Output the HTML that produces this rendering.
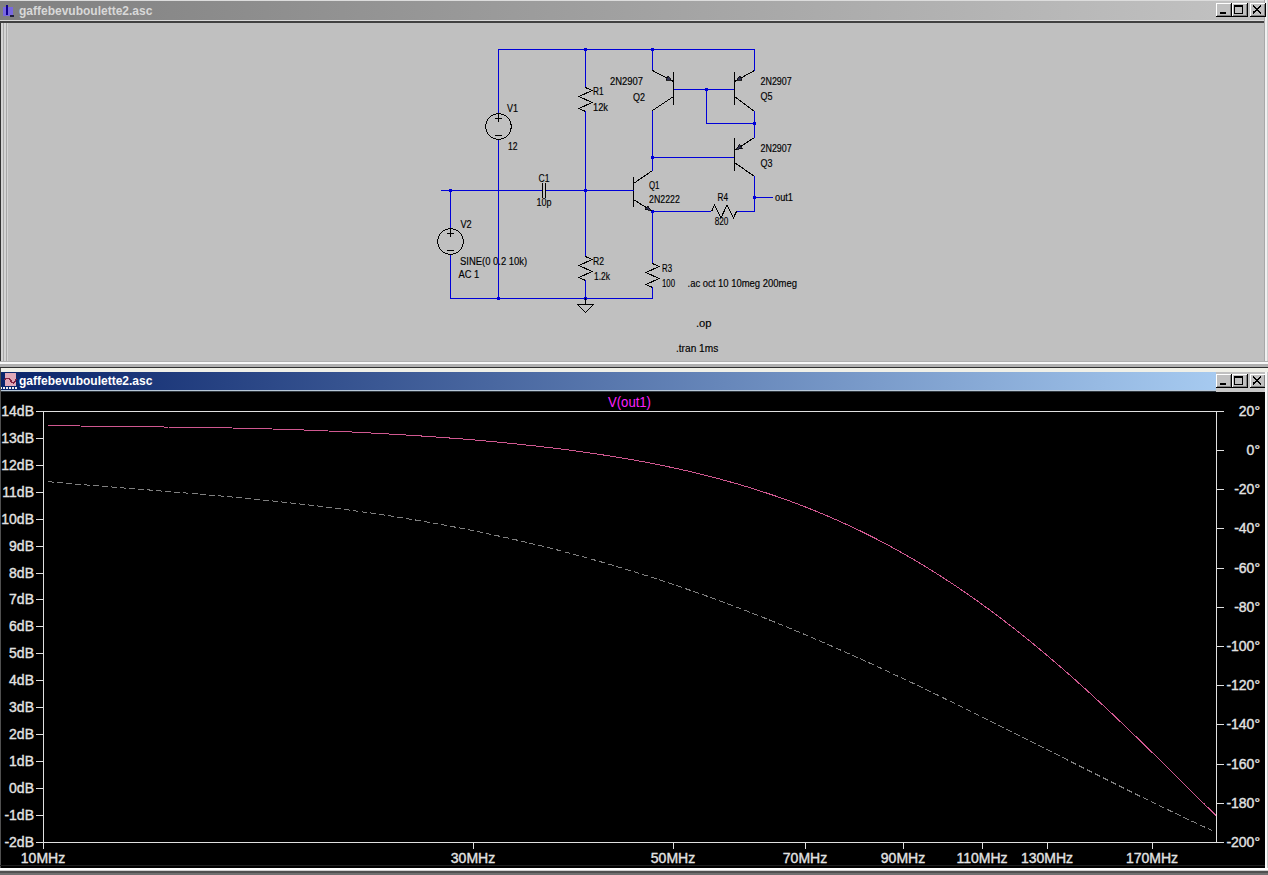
<!DOCTYPE html>
<html><head><meta charset="utf-8"><style>html,body{margin:0;padding:0;background:#000;overflow:hidden}svg{display:block}text{font-family:"Liberation Sans",sans-serif}</style></head>
<body><svg width="1268" height="875" viewBox="0 0 1268 875" shape-rendering="crispEdges">
<rect x="0" y="0" width="1268" height="368" fill="#c0c0c0"/>
<rect x="0" y="0" width="1268" height="1" fill="#dcdcdc"/>
<defs><linearGradient id="tg1" x1="0" x2="1216" gradientUnits="userSpaceOnUse"><stop offset="0" stop-color="#808080"/><stop offset="1" stop-color="#c0c0c0"/></linearGradient><linearGradient id="tg2" x1="0" x2="1216" gradientUnits="userSpaceOnUse"><stop offset="0" stop-color="#0a246a"/><stop offset="1" stop-color="#a6caf0"/></linearGradient></defs>
<rect x="0" y="1" width="1268" height="19" fill="url(#tg1)"/>
<rect x="1216" y="1" width="52" height="19" fill="#c0c0c0"/>
<rect x="0" y="20" width="1268" height="1" fill="#d8d8d8"/>
<rect x="0" y="21" width="1268" height="2" fill="#404040"/>
<rect x="0" y="23" width="1" height="338" fill="#333333"/>
<rect x="1" y="23" width="1" height="338" fill="#d4d4d4"/>
<rect x="2" y="23" width="1" height="338" fill="#d4d4d4"/>
<rect x="3" y="23" width="1" height="338" fill="#a8a8a8"/>
<rect x="4" y="23" width="1" height="338" fill="#d4d4d4"/>
<rect x="5" y="23" width="1" height="338" fill="#d4d4d4"/>
<rect x="6" y="23" width="1" height="338" fill="#a8a8a8"/>
<rect x="7" y="23" width="1" height="338" fill="#d4d4d4"/>
<rect x="0" y="23" width="1" height="345" fill="#333333"/>
<rect x="1264" y="0" width="1" height="368" fill="#a8a8a8"/>
<rect x="1265" y="0" width="1" height="368" fill="#f0f0f0"/>
<rect x="1266" y="0" width="1" height="368" fill="#f0f0f0"/>
<rect x="1267" y="0" width="1" height="368" fill="#d0d0d0"/>
<rect x="0" y="361" width="1268" height="1" fill="#b0b0b0"/>
<rect x="0" y="362" width="1268" height="2" fill="#f8f8f8"/>
<rect x="0" y="364" width="1268" height="3" fill="#b0b0b0"/>
<rect x="0" y="367" width="1268" height="1" fill="#303030"/>
<rect x="1216" y="3" width="16" height="14" fill="#c0c0c0"/>
<line x1="1216" y1="3.5" x2="1231" y2="3.5" stroke="#ffffff" stroke-width="1"/>
<line x1="1216.5" y1="3" x2="1216.5" y2="16" stroke="#ffffff" stroke-width="1"/>
<line x1="1216" y1="16.5" x2="1232" y2="16.5" stroke="#000000" stroke-width="1"/>
<line x1="1231.5" y1="3" x2="1231.5" y2="17" stroke="#000000" stroke-width="1"/>
<line x1="1217" y1="15.5" x2="1231" y2="15.5" stroke="#808080" stroke-width="1"/>
<line x1="1230.5" y1="4" x2="1230.5" y2="16" stroke="#808080" stroke-width="1"/>
<rect x="1232" y="3" width="16" height="14" fill="#c0c0c0"/>
<line x1="1232" y1="3.5" x2="1247" y2="3.5" stroke="#ffffff" stroke-width="1"/>
<line x1="1232.5" y1="3" x2="1232.5" y2="16" stroke="#ffffff" stroke-width="1"/>
<line x1="1232" y1="16.5" x2="1248" y2="16.5" stroke="#000000" stroke-width="1"/>
<line x1="1247.5" y1="3" x2="1247.5" y2="17" stroke="#000000" stroke-width="1"/>
<line x1="1233" y1="15.5" x2="1247" y2="15.5" stroke="#808080" stroke-width="1"/>
<line x1="1246.5" y1="4" x2="1246.5" y2="16" stroke="#808080" stroke-width="1"/>
<rect x="1250" y="3" width="16" height="14" fill="#c0c0c0"/>
<line x1="1250" y1="3.5" x2="1265" y2="3.5" stroke="#ffffff" stroke-width="1"/>
<line x1="1250.5" y1="3" x2="1250.5" y2="16" stroke="#ffffff" stroke-width="1"/>
<line x1="1250" y1="16.5" x2="1266" y2="16.5" stroke="#000000" stroke-width="1"/>
<line x1="1265.5" y1="3" x2="1265.5" y2="17" stroke="#000000" stroke-width="1"/>
<line x1="1251" y1="15.5" x2="1265" y2="15.5" stroke="#808080" stroke-width="1"/>
<line x1="1264.5" y1="4" x2="1264.5" y2="16" stroke="#808080" stroke-width="1"/>
<rect x="1220" y="12" width="6" height="2" fill="#000000"/>
<rect x="1234.5" y="5.5" width="8" height="8" fill="none" stroke="#000" stroke-width="1"/>
<rect x="1234" y="6" width="9" height="1" fill="#000000"/>
<path d="M1253 6 L1261 13 M1261 6 L1253 13" stroke="#000" stroke-width="1.6"/>
<text x="19" y="15" font-size="12" fill="#d8d8d8" text-anchor="start" font-weight="bold" >gaffebevuboulette2.asc</text>
<rect x="3" y="7" width="10" height="9" fill="#7868e0"/><rect x="6" y="5" width="2" height="10" fill="#100090"/><rect x="10" y="15" width="4" height="2" fill="#202040"/>
<line x1="498" y1="49.5" x2="755" y2="49.5" stroke="#0000d8" stroke-width="1"/>
<line x1="498.5" y1="49" x2="498.5" y2="114" stroke="#0000d8" stroke-width="1"/>
<line x1="498.5" y1="139" x2="498.5" y2="299" stroke="#0000d8" stroke-width="1"/>
<line x1="585.5" y1="49" x2="585.5" y2="88" stroke="#0000d8" stroke-width="1"/>
<line x1="585.5" y1="111" x2="585.5" y2="257" stroke="#0000d8" stroke-width="1"/>
<line x1="585.5" y1="280" x2="585.5" y2="299" stroke="#0000d8" stroke-width="1"/>
<line x1="441" y1="190.5" x2="543" y2="190.5" stroke="#0000d8" stroke-width="1"/>
<line x1="546" y1="190.5" x2="634" y2="190.5" stroke="#0000d8" stroke-width="1"/>
<line x1="450.5" y1="190" x2="450.5" y2="229" stroke="#0000d8" stroke-width="1"/>
<line x1="450.5" y1="254" x2="450.5" y2="299" stroke="#0000d8" stroke-width="1"/>
<line x1="450" y1="298.5" x2="653" y2="298.5" stroke="#0000d8" stroke-width="1"/>
<line x1="652.5" y1="49" x2="652.5" y2="71" stroke="#0000d8" stroke-width="1"/>
<line x1="652.5" y1="110" x2="652.5" y2="171" stroke="#0000d8" stroke-width="1"/>
<line x1="652.5" y1="211" x2="652.5" y2="264" stroke="#0000d8" stroke-width="1"/>
<line x1="652.5" y1="287" x2="652.5" y2="299" stroke="#0000d8" stroke-width="1"/>
<line x1="673" y1="89.5" x2="735" y2="89.5" stroke="#0000d8" stroke-width="1"/>
<line x1="706.5" y1="89" x2="706.5" y2="124" stroke="#0000d8" stroke-width="1"/>
<line x1="706" y1="123.5" x2="755" y2="123.5" stroke="#0000d8" stroke-width="1"/>
<line x1="754.5" y1="49" x2="754.5" y2="71" stroke="#0000d8" stroke-width="1"/>
<line x1="754.5" y1="111" x2="754.5" y2="138" stroke="#0000d8" stroke-width="1"/>
<line x1="754.5" y1="176" x2="754.5" y2="212" stroke="#0000d8" stroke-width="1"/>
<line x1="652" y1="157.5" x2="735" y2="157.5" stroke="#0000d8" stroke-width="1"/>
<line x1="652" y1="211.5" x2="711" y2="211.5" stroke="#0000d8" stroke-width="1"/>
<line x1="737" y1="211.5" x2="755" y2="211.5" stroke="#0000d8" stroke-width="1"/>
<line x1="754" y1="197.5" x2="773" y2="197.5" stroke="#0000d8" stroke-width="1"/>
<rect x="584" y="48" width="3" height="3" fill="#0000d8"/>
<rect x="651" y="48" width="3" height="3" fill="#0000d8"/>
<rect x="449" y="189" width="3" height="3" fill="#0000d8"/>
<rect x="584" y="189" width="3" height="3" fill="#0000d8"/>
<rect x="497" y="297" width="3" height="3" fill="#0000d8"/>
<rect x="584" y="297" width="3" height="3" fill="#0000d8"/>
<rect x="705" y="88" width="3" height="3" fill="#0000d8"/>
<rect x="753" y="122" width="3" height="3" fill="#0000d8"/>
<rect x="651" y="156" width="3" height="3" fill="#0000d8"/>
<rect x="651" y="210" width="3" height="3" fill="#0000d8"/>
<rect x="753" y="196" width="3" height="3" fill="#0000d8"/>
<circle cx="498.5" cy="126.5" r="12.8" fill="none" stroke="#000000" stroke-width="1"/>
<line x1="495" y1="118.5" x2="502" y2="118.5" stroke="#000000" stroke-width="1"/>
<line x1="498.5" y1="113" x2="498.5" y2="122" stroke="#000000" stroke-width="1"/>
<line x1="495" y1="135.5" x2="502" y2="135.5" stroke="#000000" stroke-width="1"/>
<circle cx="450.5" cy="241.5" r="12.8" fill="none" stroke="#000000" stroke-width="1"/>
<line x1="447" y1="233.5" x2="454" y2="233.5" stroke="#000000" stroke-width="1"/>
<line x1="450.5" y1="228" x2="450.5" y2="237" stroke="#000000" stroke-width="1"/>
<line x1="447" y1="250.5" x2="454" y2="250.5" stroke="#000000" stroke-width="1"/>
<path d="M585.5,87.5 L592.0,90.5 L579.0,96.5 L592.0,102.5 L579.0,108.5 L585.5,111.5" fill="none" stroke="#000000" stroke-width="1"/>
<path d="M585.5,256.5 L592.0,259.5 L579.0,265.5 L592.0,271.5 L579.0,277.5 L585.5,280.5" fill="none" stroke="#000000" stroke-width="1"/>
<path d="M652.5,263.5 L659.0,266.5 L646.0,272.5 L659.0,278.5 L646.0,284.5 L652.5,287.5" fill="none" stroke="#000000" stroke-width="1"/>
<path d="M711.5,211.5 L714.625,205.0 L720.875,218.0 L727.125,205.0 L733.375,218.0 L736.5,211.5" fill="none" stroke="#000000" stroke-width="1"/>
<line x1="542.5" y1="183" x2="542.5" y2="198" stroke="#000000" stroke-width="1"/>
<line x1="545.5" y1="183" x2="545.5" y2="198" stroke="#000000" stroke-width="1"/>
<line x1="585.5" y1="298" x2="585.5" y2="305" stroke="#000000" stroke-width="1"/>
<path d="M577.5,304.5 L593.5,304.5 L585.5,312.5 Z" fill="none" stroke="#000" stroke-width="1"/>

<line x1="673.5" y1="72" x2="673.5" y2="105" stroke="#000000" stroke-width="1"/>
<line x1="673.5" y1="81.5" x2="652.5" y2="70.5" stroke="#000000" stroke-width="1"/>
<line x1="673.5" y1="96.5" x2="652.5" y2="110.5" stroke="#000000" stroke-width="1"/>

<line x1="734.5" y1="72" x2="734.5" y2="105" stroke="#000000" stroke-width="1"/>
<line x1="734.5" y1="81.5" x2="754.5" y2="70.5" stroke="#000000" stroke-width="1"/>
<line x1="734.5" y1="96.5" x2="754.5" y2="111.5" stroke="#000000" stroke-width="1"/>

<line x1="734.5" y1="138" x2="734.5" y2="171" stroke="#000000" stroke-width="1"/>
<line x1="734.5" y1="150.5" x2="754.5" y2="137.5" stroke="#000000" stroke-width="1"/>
<line x1="734.5" y1="162.5" x2="754.5" y2="176.5" stroke="#000000" stroke-width="1"/>

<line x1="633.5" y1="177" x2="633.5" y2="207" stroke="#000000" stroke-width="1"/>
<line x1="633.5" y1="183.5" x2="652.5" y2="170.5" stroke="#000000" stroke-width="1"/>
<line x1="633.5" y1="199.5" x2="652.5" y2="211.5" stroke="#000000" stroke-width="1"/>
<line x1="585" y1="190.5" x2="634" y2="190.5" stroke="#0000d8" stroke-width="1"/>
<path d="M671.4,80.4 L665.8108248369228,80.29454386484761 L668.1308598102755,75.86538618844682 Z" fill="#303050" stroke="#000000" stroke-width="0.8"/>
<path d="M736.5,80.4 L739.6762826689528,75.7998664794476 L742.0858764178136,80.18094602283084 Z" fill="#303050" stroke="#000000" stroke-width="0.8"/>
<path d="M736.5,149.2 L739.3297472050147,144.37894920627133 L742.0546889579916,148.57116728777453 Z" fill="#303050" stroke="#000000" stroke-width="0.8"/>
<path d="M650.6,210.3 L645.0375730063752,209.74375730063753 L647.7075379633152,205.51631278548268 Z" fill="#303050" stroke="#000000" stroke-width="0.8"/>
<text x="507" y="112" font-size="10" fill="#000000" text-anchor="start" font-weight="normal" textLength="11" lengthAdjust="spacingAndGlyphs" stroke="#000" stroke-width="0.15">V1</text>
<text x="508" y="150" font-size="10" fill="#000000" text-anchor="start" font-weight="normal" textLength="9.5" lengthAdjust="spacingAndGlyphs" stroke="#000" stroke-width="0.15">12</text>
<text x="593" y="95" font-size="10" fill="#000000" text-anchor="start" font-weight="normal" textLength="10.5" lengthAdjust="spacingAndGlyphs" stroke="#000" stroke-width="0.15">R1</text>
<text x="593" y="111" font-size="10" fill="#000000" text-anchor="start" font-weight="normal" textLength="15" lengthAdjust="spacingAndGlyphs" stroke="#000" stroke-width="0.15">12k</text>
<text x="538.5" y="182" font-size="10" fill="#000000" text-anchor="start" font-weight="normal" textLength="11" lengthAdjust="spacingAndGlyphs" stroke="#000" stroke-width="0.15">C1</text>
<text x="536.5" y="206" font-size="10" fill="#000000" text-anchor="start" font-weight="normal" textLength="15" lengthAdjust="spacingAndGlyphs" stroke="#000" stroke-width="0.15">10p</text>
<text x="460.5" y="228" font-size="10" fill="#000000" text-anchor="start" font-weight="normal" textLength="11.2" lengthAdjust="spacingAndGlyphs" stroke="#000" stroke-width="0.15">V2</text>
<text x="460" y="265" font-size="10" fill="#000000" text-anchor="start" font-weight="normal" textLength="67.2" lengthAdjust="spacingAndGlyphs" stroke="#000" stroke-width="0.15">SINE(0 0.2 10k)</text>
<text x="458.5" y="278" font-size="10" fill="#000000" text-anchor="start" font-weight="normal" textLength="20.8" lengthAdjust="spacingAndGlyphs" stroke="#000" stroke-width="0.15">AC 1</text>
<text x="593" y="265" font-size="10" fill="#000000" text-anchor="start" font-weight="normal" textLength="11" lengthAdjust="spacingAndGlyphs" stroke="#000" stroke-width="0.15">R2</text>
<text x="594" y="280" font-size="10" fill="#000000" text-anchor="start" font-weight="normal" textLength="16" lengthAdjust="spacingAndGlyphs" stroke="#000" stroke-width="0.15">1.2k</text>
<text x="662" y="272" font-size="10" fill="#000000" text-anchor="start" font-weight="normal" textLength="10" lengthAdjust="spacingAndGlyphs" stroke="#000" stroke-width="0.15">R3</text>
<text x="662" y="287" font-size="10" fill="#000000" text-anchor="start" font-weight="normal" textLength="13" lengthAdjust="spacingAndGlyphs" stroke="#000" stroke-width="0.15">100</text>
<text x="687.5" y="287" font-size="10" fill="#000000" text-anchor="start" font-weight="normal" textLength="109.5" lengthAdjust="spacingAndGlyphs" stroke="#000" stroke-width="0.15">.ac oct 10 10meg 200meg</text>
<text x="696" y="327" font-size="10" fill="#000000" text-anchor="start" font-weight="normal" textLength="15.6" lengthAdjust="spacingAndGlyphs" stroke="#000" stroke-width="0.15">.op</text>
<text x="676" y="352" font-size="10" fill="#000000" text-anchor="start" font-weight="normal" textLength="42.2" lengthAdjust="spacingAndGlyphs" stroke="#000" stroke-width="0.15">.tran 1ms</text>
<text x="610" y="85" font-size="10" fill="#000000" text-anchor="start" font-weight="normal" textLength="33" lengthAdjust="spacingAndGlyphs" stroke="#000" stroke-width="0.15">2N2907</text>
<text x="633" y="101" font-size="10" fill="#000000" text-anchor="start" font-weight="normal" textLength="12" lengthAdjust="spacingAndGlyphs" stroke="#000" stroke-width="0.15">Q2</text>
<text x="760.5" y="85" font-size="10" fill="#000000" text-anchor="start" font-weight="normal" textLength="31.2" lengthAdjust="spacingAndGlyphs" stroke="#000" stroke-width="0.15">2N2907</text>
<text x="760.5" y="100" font-size="10" fill="#000000" text-anchor="start" font-weight="normal" textLength="12" lengthAdjust="spacingAndGlyphs" stroke="#000" stroke-width="0.15">Q5</text>
<text x="760.5" y="152" font-size="10" fill="#000000" text-anchor="start" font-weight="normal" textLength="31.2" lengthAdjust="spacingAndGlyphs" stroke="#000" stroke-width="0.15">2N2907</text>
<text x="760.5" y="167" font-size="10" fill="#000000" text-anchor="start" font-weight="normal" textLength="12" lengthAdjust="spacingAndGlyphs" stroke="#000" stroke-width="0.15">Q3</text>
<text x="649" y="189" font-size="10" fill="#000000" text-anchor="start" font-weight="normal" textLength="10.5" lengthAdjust="spacingAndGlyphs" stroke="#000" stroke-width="0.15">Q1</text>
<text x="649" y="203" font-size="10" fill="#000000" text-anchor="start" font-weight="normal" textLength="30.8" lengthAdjust="spacingAndGlyphs" stroke="#000" stroke-width="0.15">2N2222</text>
<text x="717.5" y="201" font-size="10" fill="#000000" text-anchor="start" font-weight="normal" textLength="10.5" lengthAdjust="spacingAndGlyphs" stroke="#000" stroke-width="0.15">R4</text>
<text x="714.7" y="225" font-size="10" fill="#000000" text-anchor="start" font-weight="normal" textLength="13.7" lengthAdjust="spacingAndGlyphs" stroke="#000" stroke-width="0.15">820</text>
<text x="775" y="201" font-size="10" fill="#000000" text-anchor="start" font-weight="normal" textLength="18" lengthAdjust="spacingAndGlyphs" stroke="#000" stroke-width="0.15">out1</text>
<rect x="0" y="368" width="1268" height="507" fill="#000000"/>
<rect x="0" y="368" width="1268" height="4" fill="#f0f0e8"/>
<rect x="0" y="372" width="1216" height="20" fill="url(#tg2)"/>
<rect x="1216" y="372" width="52" height="20" fill="#c0c0c0"/>
<rect x="0" y="390" width="1268" height="1" fill="#b8c8d8"/>
<rect x="0" y="391" width="1268" height="1" fill="#303840"/>
<rect x="1216" y="388" width="52" height="4" fill="#c8c8c8"/>
<rect x="1216" y="374" width="16" height="14" fill="#c0c0c0"/>
<line x1="1216" y1="374.5" x2="1231" y2="374.5" stroke="#ffffff" stroke-width="1"/>
<line x1="1216.5" y1="374" x2="1216.5" y2="387" stroke="#ffffff" stroke-width="1"/>
<line x1="1216" y1="387.5" x2="1232" y2="387.5" stroke="#000000" stroke-width="1"/>
<line x1="1231.5" y1="374" x2="1231.5" y2="388" stroke="#000000" stroke-width="1"/>
<line x1="1217" y1="386.5" x2="1231" y2="386.5" stroke="#808080" stroke-width="1"/>
<line x1="1230.5" y1="375" x2="1230.5" y2="387" stroke="#808080" stroke-width="1"/>
<rect x="1232" y="374" width="16" height="14" fill="#c0c0c0"/>
<line x1="1232" y1="374.5" x2="1247" y2="374.5" stroke="#ffffff" stroke-width="1"/>
<line x1="1232.5" y1="374" x2="1232.5" y2="387" stroke="#ffffff" stroke-width="1"/>
<line x1="1232" y1="387.5" x2="1248" y2="387.5" stroke="#000000" stroke-width="1"/>
<line x1="1247.5" y1="374" x2="1247.5" y2="388" stroke="#000000" stroke-width="1"/>
<line x1="1233" y1="386.5" x2="1247" y2="386.5" stroke="#808080" stroke-width="1"/>
<line x1="1246.5" y1="375" x2="1246.5" y2="387" stroke="#808080" stroke-width="1"/>
<rect x="1250" y="374" width="16" height="14" fill="#c0c0c0"/>
<line x1="1250" y1="374.5" x2="1265" y2="374.5" stroke="#ffffff" stroke-width="1"/>
<line x1="1250.5" y1="374" x2="1250.5" y2="387" stroke="#ffffff" stroke-width="1"/>
<line x1="1250" y1="387.5" x2="1266" y2="387.5" stroke="#000000" stroke-width="1"/>
<line x1="1265.5" y1="374" x2="1265.5" y2="388" stroke="#000000" stroke-width="1"/>
<line x1="1251" y1="386.5" x2="1265" y2="386.5" stroke="#808080" stroke-width="1"/>
<line x1="1264.5" y1="375" x2="1264.5" y2="387" stroke="#808080" stroke-width="1"/>
<rect x="1220" y="383" width="6" height="2" fill="#000000"/>
<rect x="1234.5" y="376.5" width="8" height="8" fill="none" stroke="#000" stroke-width="1"/>
<rect x="1234" y="377" width="9" height="1" fill="#000000"/>
<path d="M1253 377 L1261 384 M1261 377 L1253 384" stroke="#000" stroke-width="1.6"/>
<text x="19" y="385" font-size="12" fill="#ffffff" text-anchor="start" font-weight="bold" >gaffebevuboulette2.asc</text>
<rect x="5" y="373" width="11" height="13" fill="#e0a8b8"/><path d="M5 380 Q8 376 11 381 T16 379" stroke="#802040" fill="none" stroke-width="1.5"/>
<rect x="0" y="387" width="2" height="2" fill="#f0f0f0"/>
<rect x="3" y="387" width="2" height="2" fill="#f0f0f0"/>
<rect x="6" y="387" width="2" height="2" fill="#f0f0f0"/>
<rect x="9" y="387" width="2" height="2" fill="#f0f0f0"/>
<rect x="12" y="387" width="2" height="2" fill="#f0f0f0"/>
<rect x="15" y="387" width="2" height="2" fill="#f0f0f0"/>
<rect x="0" y="368" width="1" height="507" fill="#505050"/>
<rect x="1265" y="372" width="2" height="496" fill="#f8f8f8"/>
<rect x="1267" y="372" width="1" height="496" fill="#c8c8c8"/>
<rect x="0" y="865" width="1265" height="1" fill="#202020"/>
<rect x="0" y="868" width="1268" height="2" fill="#ffffff"/>
<rect x="0" y="870" width="1268" height="1" fill="#d0d0d0"/>
<rect x="0" y="871" width="1268" height="2" fill="#505050"/>
<rect x="0" y="873" width="1268" height="2" fill="#707070"/>
<line x1="43" y1="411.5" x2="1217" y2="411.5" stroke="#e0e0e0" stroke-width="1"/>
<line x1="43" y1="842.5" x2="1217" y2="842.5" stroke="#e0e0e0" stroke-width="1"/>
<line x1="43.5" y1="411" x2="43.5" y2="843" stroke="#e0e0e0" stroke-width="1"/>
<line x1="1216.5" y1="411" x2="1216.5" y2="843" stroke="#e0e0e0" stroke-width="1"/>
<line x1="36" y1="411.5" x2="44" y2="411.5" stroke="#e0e0e0" stroke-width="1"/>
<text x="34" y="416" font-size="14" fill="#e0e0e0" text-anchor="end" font-weight="normal" stroke="#e8e8e8" stroke-width="0.35">14dB</text>
<line x1="36" y1="438.5" x2="44" y2="438.5" stroke="#e0e0e0" stroke-width="1"/>
<text x="34" y="443" font-size="14" fill="#e0e0e0" text-anchor="end" font-weight="normal" stroke="#e8e8e8" stroke-width="0.35">13dB</text>
<line x1="36" y1="465.5" x2="44" y2="465.5" stroke="#e0e0e0" stroke-width="1"/>
<text x="34" y="470" font-size="14" fill="#e0e0e0" text-anchor="end" font-weight="normal" stroke="#e8e8e8" stroke-width="0.35">12dB</text>
<line x1="36" y1="492.5" x2="44" y2="492.5" stroke="#e0e0e0" stroke-width="1"/>
<text x="34" y="497" font-size="14" fill="#e0e0e0" text-anchor="end" font-weight="normal" stroke="#e8e8e8" stroke-width="0.35">11dB</text>
<line x1="36" y1="519.5" x2="44" y2="519.5" stroke="#e0e0e0" stroke-width="1"/>
<text x="34" y="524" font-size="14" fill="#e0e0e0" text-anchor="end" font-weight="normal" stroke="#e8e8e8" stroke-width="0.35">10dB</text>
<line x1="36" y1="546.5" x2="44" y2="546.5" stroke="#e0e0e0" stroke-width="1"/>
<text x="34" y="551" font-size="14" fill="#e0e0e0" text-anchor="end" font-weight="normal" stroke="#e8e8e8" stroke-width="0.35">9dB</text>
<line x1="36" y1="573.5" x2="44" y2="573.5" stroke="#e0e0e0" stroke-width="1"/>
<text x="34" y="578" font-size="14" fill="#e0e0e0" text-anchor="end" font-weight="normal" stroke="#e8e8e8" stroke-width="0.35">8dB</text>
<line x1="36" y1="599.5" x2="44" y2="599.5" stroke="#e0e0e0" stroke-width="1"/>
<text x="34" y="604" font-size="14" fill="#e0e0e0" text-anchor="end" font-weight="normal" stroke="#e8e8e8" stroke-width="0.35">7dB</text>
<line x1="36" y1="626.5" x2="44" y2="626.5" stroke="#e0e0e0" stroke-width="1"/>
<text x="34" y="631" font-size="14" fill="#e0e0e0" text-anchor="end" font-weight="normal" stroke="#e8e8e8" stroke-width="0.35">6dB</text>
<line x1="36" y1="653.5" x2="44" y2="653.5" stroke="#e0e0e0" stroke-width="1"/>
<text x="34" y="658" font-size="14" fill="#e0e0e0" text-anchor="end" font-weight="normal" stroke="#e8e8e8" stroke-width="0.35">5dB</text>
<line x1="36" y1="680.5" x2="44" y2="680.5" stroke="#e0e0e0" stroke-width="1"/>
<text x="34" y="685" font-size="14" fill="#e0e0e0" text-anchor="end" font-weight="normal" stroke="#e8e8e8" stroke-width="0.35">4dB</text>
<line x1="36" y1="707.5" x2="44" y2="707.5" stroke="#e0e0e0" stroke-width="1"/>
<text x="34" y="712" font-size="14" fill="#e0e0e0" text-anchor="end" font-weight="normal" stroke="#e8e8e8" stroke-width="0.35">3dB</text>
<line x1="36" y1="734.5" x2="44" y2="734.5" stroke="#e0e0e0" stroke-width="1"/>
<text x="34" y="739" font-size="14" fill="#e0e0e0" text-anchor="end" font-weight="normal" stroke="#e8e8e8" stroke-width="0.35">2dB</text>
<line x1="36" y1="761.5" x2="44" y2="761.5" stroke="#e0e0e0" stroke-width="1"/>
<text x="34" y="766" font-size="14" fill="#e0e0e0" text-anchor="end" font-weight="normal" stroke="#e8e8e8" stroke-width="0.35">1dB</text>
<line x1="36" y1="788.5" x2="44" y2="788.5" stroke="#e0e0e0" stroke-width="1"/>
<text x="34" y="793" font-size="14" fill="#e0e0e0" text-anchor="end" font-weight="normal" stroke="#e8e8e8" stroke-width="0.35">0dB</text>
<line x1="36" y1="815.5" x2="44" y2="815.5" stroke="#e0e0e0" stroke-width="1"/>
<text x="34" y="820" font-size="14" fill="#e0e0e0" text-anchor="end" font-weight="normal" stroke="#e8e8e8" stroke-width="0.35">-1dB</text>
<line x1="36" y1="842.5" x2="44" y2="842.5" stroke="#e0e0e0" stroke-width="1"/>
<text x="34" y="847" font-size="14" fill="#e0e0e0" text-anchor="end" font-weight="normal" stroke="#e8e8e8" stroke-width="0.35">-2dB</text>
<line x1="1216" y1="411.5" x2="1224" y2="411.5" stroke="#e0e0e0" stroke-width="1"/>
<text x="1260" y="416" font-size="14" fill="#e0e0e0" text-anchor="end" font-weight="normal" stroke="#e8e8e8" stroke-width="0.35">20°</text>
<line x1="1216" y1="450.5" x2="1224" y2="450.5" stroke="#e0e0e0" stroke-width="1"/>
<text x="1260" y="455" font-size="14" fill="#e0e0e0" text-anchor="end" font-weight="normal" stroke="#e8e8e8" stroke-width="0.35">0°</text>
<line x1="1216" y1="489.5" x2="1224" y2="489.5" stroke="#e0e0e0" stroke-width="1"/>
<text x="1260" y="494" font-size="14" fill="#e0e0e0" text-anchor="end" font-weight="normal" stroke="#e8e8e8" stroke-width="0.35">-20°</text>
<line x1="1216" y1="528.5" x2="1224" y2="528.5" stroke="#e0e0e0" stroke-width="1"/>
<text x="1260" y="533" font-size="14" fill="#e0e0e0" text-anchor="end" font-weight="normal" stroke="#e8e8e8" stroke-width="0.35">-40°</text>
<line x1="1216" y1="568.5" x2="1224" y2="568.5" stroke="#e0e0e0" stroke-width="1"/>
<text x="1260" y="573" font-size="14" fill="#e0e0e0" text-anchor="end" font-weight="normal" stroke="#e8e8e8" stroke-width="0.35">-60°</text>
<line x1="1216" y1="607.5" x2="1224" y2="607.5" stroke="#e0e0e0" stroke-width="1"/>
<text x="1260" y="612" font-size="14" fill="#e0e0e0" text-anchor="end" font-weight="normal" stroke="#e8e8e8" stroke-width="0.35">-80°</text>
<line x1="1216" y1="646.5" x2="1224" y2="646.5" stroke="#e0e0e0" stroke-width="1"/>
<text x="1260" y="651" font-size="14" fill="#e0e0e0" text-anchor="end" font-weight="normal" stroke="#e8e8e8" stroke-width="0.35">-100°</text>
<line x1="1216" y1="685.5" x2="1224" y2="685.5" stroke="#e0e0e0" stroke-width="1"/>
<text x="1260" y="690" font-size="14" fill="#e0e0e0" text-anchor="end" font-weight="normal" stroke="#e8e8e8" stroke-width="0.35">-120°</text>
<line x1="1216" y1="724.5" x2="1224" y2="724.5" stroke="#e0e0e0" stroke-width="1"/>
<text x="1260" y="729" font-size="14" fill="#e0e0e0" text-anchor="end" font-weight="normal" stroke="#e8e8e8" stroke-width="0.35">-140°</text>
<line x1="1216" y1="764.5" x2="1224" y2="764.5" stroke="#e0e0e0" stroke-width="1"/>
<text x="1260" y="769" font-size="14" fill="#e0e0e0" text-anchor="end" font-weight="normal" stroke="#e8e8e8" stroke-width="0.35">-160°</text>
<line x1="1216" y1="803.5" x2="1224" y2="803.5" stroke="#e0e0e0" stroke-width="1"/>
<text x="1260" y="808" font-size="14" fill="#e0e0e0" text-anchor="end" font-weight="normal" stroke="#e8e8e8" stroke-width="0.35">-180°</text>
<line x1="1216" y1="842.5" x2="1224" y2="842.5" stroke="#e0e0e0" stroke-width="1"/>
<text x="1260" y="847" font-size="14" fill="#e0e0e0" text-anchor="end" font-weight="normal" stroke="#e8e8e8" stroke-width="0.35">-200°</text>
<line x1="43.5" y1="842" x2="43.5" y2="849" stroke="#e0e0e0" stroke-width="1"/>
<line x1="473.5" y1="842" x2="473.5" y2="849" stroke="#e0e0e0" stroke-width="1"/>
<text x="473" y="863" font-size="14" fill="#e0e0e0" text-anchor="middle" font-weight="normal" stroke="#e8e8e8" stroke-width="0.35">30MHz</text>
<line x1="673.5" y1="842" x2="673.5" y2="849" stroke="#e0e0e0" stroke-width="1"/>
<text x="673" y="863" font-size="14" fill="#e0e0e0" text-anchor="middle" font-weight="normal" stroke="#e8e8e8" stroke-width="0.35">50MHz</text>
<line x1="805.5" y1="842" x2="805.5" y2="849" stroke="#e0e0e0" stroke-width="1"/>
<text x="805" y="863" font-size="14" fill="#e0e0e0" text-anchor="middle" font-weight="normal" stroke="#e8e8e8" stroke-width="0.35">70MHz</text>
<line x1="903.5" y1="842" x2="903.5" y2="849" stroke="#e0e0e0" stroke-width="1"/>
<text x="903" y="863" font-size="14" fill="#e0e0e0" text-anchor="middle" font-weight="normal" stroke="#e8e8e8" stroke-width="0.35">90MHz</text>
<line x1="982.5" y1="842" x2="982.5" y2="849" stroke="#e0e0e0" stroke-width="1"/>
<text x="982" y="863" font-size="14" fill="#e0e0e0" text-anchor="middle" font-weight="normal" stroke="#e8e8e8" stroke-width="0.35">110MHz</text>
<line x1="1047.5" y1="842" x2="1047.5" y2="849" stroke="#e0e0e0" stroke-width="1"/>
<text x="1047" y="863" font-size="14" fill="#e0e0e0" text-anchor="middle" font-weight="normal" stroke="#e8e8e8" stroke-width="0.35">130MHz</text>
<line x1="1152.5" y1="842" x2="1152.5" y2="849" stroke="#e0e0e0" stroke-width="1"/>
<text x="1152" y="863" font-size="14" fill="#e0e0e0" text-anchor="middle" font-weight="normal" stroke="#e8e8e8" stroke-width="0.35">170MHz</text>
<text x="43" y="863" font-size="14" fill="#e0e0e0" text-anchor="middle" font-weight="normal" stroke="#e8e8e8" stroke-width="0.35">10MHz</text>
<text x="608" y="407" font-size="14" fill="#ff20ff" text-anchor="start" font-weight="normal" textLength="43" lengthAdjust="spacingAndGlyphs">V(out1)</text>
<path d="M48,425.3 L52,425.4 L56,425.5 L60,425.6 L64,425.7 L68,425.8 L72,425.9 L76,425.9 L80,426.0 L84,426.1 L88,426.1 L92,426.2 L96,426.2 L100,426.3 L104,426.3 L108,426.4 L112,426.4 L116,426.5 L120,426.5 L124,426.5 L128,426.6 L132,426.6 L136,426.7 L140,426.7 L144,426.7 L148,426.8 L152,426.8 L156,426.9 L160,426.9 L164,427.0 L168,427.0 L172,427.1 L176,427.1 L180,427.2 L184,427.2 L188,427.3 L192,427.3 L196,427.4 L200,427.4 L204,427.5 L208,427.6 L212,427.6 L216,427.7 L220,427.8 L224,427.8 L228,427.9 L232,428.0 L236,428.1 L240,428.2 L244,428.3 L248,428.4 L252,428.5 L256,428.6 L260,428.7 L264,428.8 L268,428.9 L272,429.0 L276,429.1 L280,429.2 L284,429.4 L288,429.5 L292,429.6 L296,429.8 L300,429.9 L304,430.0 L308,430.2 L312,430.3 L316,430.5 L320,430.6 L324,430.8 L328,431.0 L332,431.1 L336,431.3 L340,431.5 L344,431.7 L348,431.9 L352,432.0 L356,432.2 L360,432.4 L364,432.6 L368,432.8 L372,433.1 L376,433.3 L380,433.5 L384,433.7 L388,433.9 L392,434.2 L396,434.4 L400,434.6 L404,434.9 L408,435.1 L412,435.4 L416,435.6 L420,435.9 L424,436.2 L428,436.4 L432,436.7 L436,437.0 L440,437.3 L444,437.6 L448,437.9 L452,438.2 L456,438.5 L460,438.8 L464,439.1 L468,439.5 L472,439.8 L476,440.1 L480,440.5 L484,440.8 L488,441.2 L492,441.6 L496,441.9 L500,442.3 L504,442.7 L508,443.1 L512,443.5 L516,443.9 L520,444.3 L524,444.7 L528,445.2 L532,445.6 L536,446.0 L540,446.5 L544,447.0 L548,447.4 L552,447.9 L556,448.4 L560,448.9 L564,449.4 L568,449.9 L572,450.5 L576,451.0 L580,451.5 L584,452.1 L588,452.7 L592,453.3 L596,453.8 L600,454.4 L604,455.1 L608,455.7 L612,456.3 L616,457.0 L620,457.6 L624,458.3 L628,459.0 L632,459.7 L636,460.4 L640,461.2 L644,461.9 L648,462.7 L652,463.4 L656,464.2 L660,465.0 L664,465.8 L668,466.7 L672,467.5 L676,468.4 L680,469.3 L684,470.2 L688,471.1 L692,472.0 L696,473.0 L700,473.9 L704,474.9 L708,475.9 L712,477.0 L716,478.0 L720,479.1 L724,480.2 L728,481.3 L732,482.4 L736,483.5 L740,484.7 L744,485.9 L748,487.1 L752,488.3 L756,489.6 L760,490.9 L764,492.2 L768,493.5 L772,494.8 L776,496.2 L780,497.6 L784,499.0 L788,500.4 L792,501.9 L796,503.4 L800,504.9 L804,506.4 L808,508.0 L812,509.6 L816,511.2 L820,512.9 L824,514.5 L828,516.2 L832,518.0 L836,519.7 L840,521.5 L844,523.3 L848,525.1 L852,527.0 L856,528.9 L860,530.8 L864,532.8 L868,534.8 L872,536.8 L876,538.8 L880,540.9 L884,543.0 L888,545.1 L892,547.3 L896,549.5 L900,551.7 L904,554.0 L908,556.3 L912,558.6 L916,560.9 L920,563.3 L924,565.7 L928,568.2 L932,570.7 L936,573.2 L940,575.7 L944,578.3 L948,580.9 L952,583.5 L956,586.2 L960,588.9 L964,591.6 L968,594.4 L972,597.2 L976,600.0 L980,602.9 L984,605.8 L988,608.7 L992,611.6 L996,614.6 L1000,617.6 L1004,620.7 L1008,623.8 L1012,626.9 L1016,630.0 L1020,633.2 L1024,636.4 L1028,639.6 L1032,642.9 L1036,646.2 L1040,649.5 L1044,652.8 L1048,656.2 L1052,659.6 L1056,663.0 L1060,666.5 L1064,670.0 L1068,673.5 L1072,677.0 L1076,680.6 L1080,684.2 L1084,687.8 L1088,691.4 L1092,695.1 L1096,698.8 L1100,702.5 L1104,706.2 L1108,709.9 L1112,713.7 L1116,717.5 L1120,721.3 L1124,725.1 L1128,728.9 L1132,732.8 L1136,736.7 L1140,740.5 L1144,744.4 L1148,748.3 L1152,752.3 L1156,756.2 L1160,760.1 L1164,764.1 L1168,768.0 L1172,772.0 L1176,776.0 L1180,779.9 L1184,783.9 L1188,787.9 L1192,791.8 L1196,795.8 L1200,799.8 L1204,803.7 L1208,807.7 L1212,811.6 L1216,815.6" fill="none" stroke="#d05890" stroke-width="1"/>
<path d="M48,481.7 L52,482.0 L56,482.4 L60,482.7 L64,483.1 L68,483.4 L72,483.7 L76,484.1 L80,484.4 L84,484.7 L88,485.1 L92,485.4 L96,485.7 L100,486.1 L104,486.4 L108,486.7 L112,487.0 L116,487.3 L120,487.7 L124,488.0 L128,488.3 L132,488.6 L136,488.9 L140,489.3 L144,489.6 L148,489.9 L152,490.2 L156,490.5 L160,490.9 L164,491.2 L168,491.5 L172,491.8 L176,492.2 L180,492.5 L184,492.8 L188,493.2 L192,493.5 L196,493.8 L200,494.2 L204,494.5 L208,494.9 L212,495.2 L216,495.6 L220,495.9 L224,496.3 L228,496.7 L232,497.0 L236,497.4 L240,497.8 L244,498.2 L248,498.5 L252,498.9 L256,499.3 L260,499.7 L264,500.1 L268,500.5 L272,500.9 L276,501.4 L280,501.8 L284,502.2 L288,502.6 L292,503.1 L296,503.5 L300,504.0 L304,504.4 L308,504.9 L312,505.4 L316,505.8 L320,506.3 L324,506.8 L328,507.3 L332,507.8 L336,508.3 L340,508.8 L344,509.3 L348,509.9 L352,510.4 L356,511.0 L360,511.5 L364,512.1 L368,512.6 L372,513.2 L376,513.8 L380,514.4 L384,515.0 L388,515.6 L392,516.2 L396,516.9 L400,517.5 L404,518.1 L408,518.8 L412,519.4 L416,520.1 L420,520.8 L424,521.5 L428,522.2 L432,522.9 L436,523.6 L440,524.3 L444,525.0 L448,525.8 L452,526.5 L456,527.3 L460,528.1 L464,528.9 L468,529.6 L472,530.4 L476,531.3 L480,532.1 L484,532.9 L488,533.8 L492,534.6 L496,535.5 L500,536.3 L504,537.2 L508,538.1 L512,539.0 L516,539.9 L520,540.8 L524,541.8 L528,542.7 L532,543.7 L536,544.6 L540,545.6 L544,546.6 L548,547.6 L552,548.6 L556,549.6 L560,550.7 L564,551.7 L568,552.8 L572,553.8 L576,554.9 L580,556.0 L584,557.1 L588,558.2 L592,559.3 L596,560.4 L600,561.6 L604,562.7 L608,563.9 L612,565.1 L616,566.3 L620,567.5 L624,568.7 L628,569.9 L632,571.1 L636,572.4 L640,573.6 L644,574.9 L648,576.1 L652,577.4 L656,578.7 L660,580.0 L664,581.4 L668,582.7 L672,584.0 L676,585.4 L680,586.7 L684,588.1 L688,589.5 L692,590.9 L696,592.3 L700,593.7 L704,595.1 L708,596.6 L712,598.0 L716,599.5 L720,601.0 L724,602.4 L728,603.9 L732,605.4 L736,606.9 L740,608.5 L744,610.0 L748,611.5 L752,613.1 L756,614.7 L760,616.2 L764,617.8 L768,619.4 L772,621.0 L776,622.6 L780,624.3 L784,625.9 L788,627.5 L792,629.2 L796,630.9 L800,632.5 L804,634.2 L808,635.9 L812,637.6 L816,639.3 L820,641.0 L824,642.8 L828,644.5 L832,646.2 L836,648.0 L840,649.8 L844,651.5 L848,653.3 L852,655.1 L856,656.9 L860,658.7 L864,660.5 L868,662.3 L872,664.1 L876,666.0 L880,667.8 L884,669.7 L888,671.5 L892,673.4 L896,675.3 L900,677.1 L904,679.0 L908,680.9 L912,682.8 L916,684.7 L920,686.6 L924,688.5 L928,690.5 L932,692.4 L936,694.3 L940,696.3 L944,698.2 L948,700.2 L952,702.1 L956,704.1 L960,706.0 L964,708.0 L968,710.0 L972,712.0 L976,713.9 L980,715.9 L984,717.9 L988,719.9 L992,721.9 L996,723.9 L1000,725.9 L1004,727.9 L1008,729.9 L1012,731.9 L1016,733.9 L1020,735.9 L1024,737.9 L1028,740.0 L1032,742.0 L1036,744.0 L1040,746.0 L1044,748.0 L1048,750.1 L1052,752.1 L1056,754.1 L1060,756.1 L1064,758.1 L1068,760.2 L1072,762.2 L1076,764.2 L1080,766.2 L1084,768.2 L1088,770.3 L1092,772.3 L1096,774.3 L1100,776.3 L1104,778.3 L1108,780.3 L1112,782.3 L1116,784.3 L1120,786.3 L1124,788.3 L1128,790.3 L1132,792.2 L1136,794.2 L1140,796.2 L1144,798.1 L1148,800.1 L1152,802.1 L1156,804.0 L1160,806.0 L1164,807.9 L1168,809.8 L1172,811.7 L1176,813.6 L1180,815.6 L1184,817.5 L1188,819.3 L1192,821.2 L1196,823.1 L1200,825.0 L1204,826.8 L1208,828.7 L1212,830.5" fill="none" stroke="#808080" stroke-width="1" stroke-dasharray="6,3"/>
</svg></body></html>
